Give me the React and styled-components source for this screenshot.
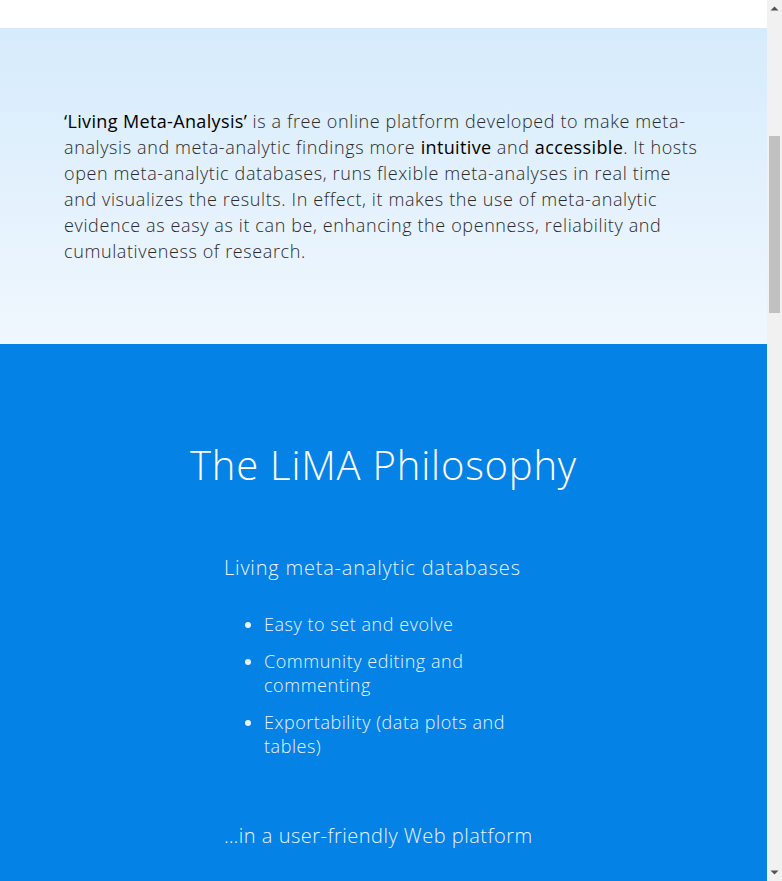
import React from 'react';
import styled, { createGlobalStyle } from 'styled-components';

const GlobalStyle = createGlobalStyle`
    html, body {
        margin: 0;
        padding: 0;
        background: #fff;
    }
    body {
        font-family: "Open Sans", Lato, sans-serif;
        font-weight: 300;
    }
`;

const Page = styled.main`
    margin-right: 15px;
`;

const TopBand = styled.div`
    height: 28px;
    background: #fff;
`;

const IntroSection = styled.section`
    background: linear-gradient(180deg, #d6ebfc 0%, #f0f7fe 100%);
    padding: 80px 64px;
`;

const IntroText = styled.p`
    margin: 0;
    font-size: 18px;
    line-height: 26px;
    color: #2a2a2a;
    letter-spacing: 0.034em;

    strong {
        font-weight: 400;
        color: #000;
        letter-spacing: 0.02em;
    }
`;

const PhilosophySection = styled.section`
    background: #0582e6;
    color: #fff;
    padding: 96px 0 120px;
`;

const Heading = styled.h2`
    margin: 0;
    text-align: center;
    font-size: 40px;
    font-weight: 300;
    line-height: 50px;
    letter-spacing: 0.02em;
`;

const Column = styled.div`
    width: 320px;
    margin: 64px 0 0 224px;
`;

const SubHeading = styled.h3`
    margin: 0;
    font-size: 20px;
    font-weight: 300;
    line-height: 28px;
    color: #e8f3ff;
    letter-spacing: ${p => p.$spacing || '0.04em'};
`;

const List = styled.ul`
    margin: 30px 0 0;
    padding-left: 40px;
    list-style: disc;
`;

const Item = styled.li`
    font-size: 18px;
    line-height: 24px;
    color: #e8f3ff;
    margin-bottom: 13px;
    letter-spacing: 0.03em;
`;

const Closing = styled(SubHeading)`
    margin-top: 64px;
`;

/* window scrollbar as shown in the screenshot */
const ScrollTrack = styled.div`
    position: fixed;
    top: 0;
    right: 0;
    bottom: 0;
    width: 15px;
    background: #f1f1f1;
`;

const ScrollThumb = styled.div`
    position: absolute;
    left: 2px;
    right: 2px;
    top: 136px;
    height: 177px;
    background: #c1c1c1;
`;

const Arrow = styled.svg`
    position: absolute;
    left: 3px;
    ${p => (p.$down ? 'bottom: 4px;' : 'top: 4px;')}
`;

export default function App() {
    return (
        <>
            <GlobalStyle />
            <Page>
                <TopBand />
                <IntroSection>
                    <IntroText>
                        <strong>‘Living Meta-Analysis’</strong> is a free online platform developed to make meta-analysis
                        and meta-analytic findings more <strong>intuitive</strong> and <strong>accessible</strong>. It hosts
                        open meta-analytic databases, runs flexible meta-analyses in real time and visualizes the results.
                        In effect, it makes the use of meta-analytic evidence as easy as it can be, enhancing the openness,
                        reliability and cumulativeness of research.
                    </IntroText>
                </IntroSection>
                <PhilosophySection>
                    <Heading>The LiMA Philosophy</Heading>
                    <Column>
                        <SubHeading>Living meta-analytic databases</SubHeading>
                        <List>
                            <Item>Easy to set and evolve</Item>
                            <Item>Community editing and commenting</Item>
                            <Item>Exportability (data plots and tables)</Item>
                        </List>
                        <Closing $spacing="0.025em">…in a user-friendly Web platform</Closing>
                    </Column>
                </PhilosophySection>
            </Page>
            <ScrollTrack>
                <Arrow width="9" height="9" viewBox="0 0 9 9">
                    <path d="M0.5 6.5 L4.5 2.5 L8.5 6.5 Z" fill="#505050" />
                </Arrow>
                <ScrollThumb />
                <Arrow $down width="9" height="9" viewBox="0 0 9 9">
                    <path d="M0.5 2.5 L4.5 6.5 L8.5 2.5 Z" fill="#505050" />
                </Arrow>
            </ScrollTrack>
        </>
    );
}
